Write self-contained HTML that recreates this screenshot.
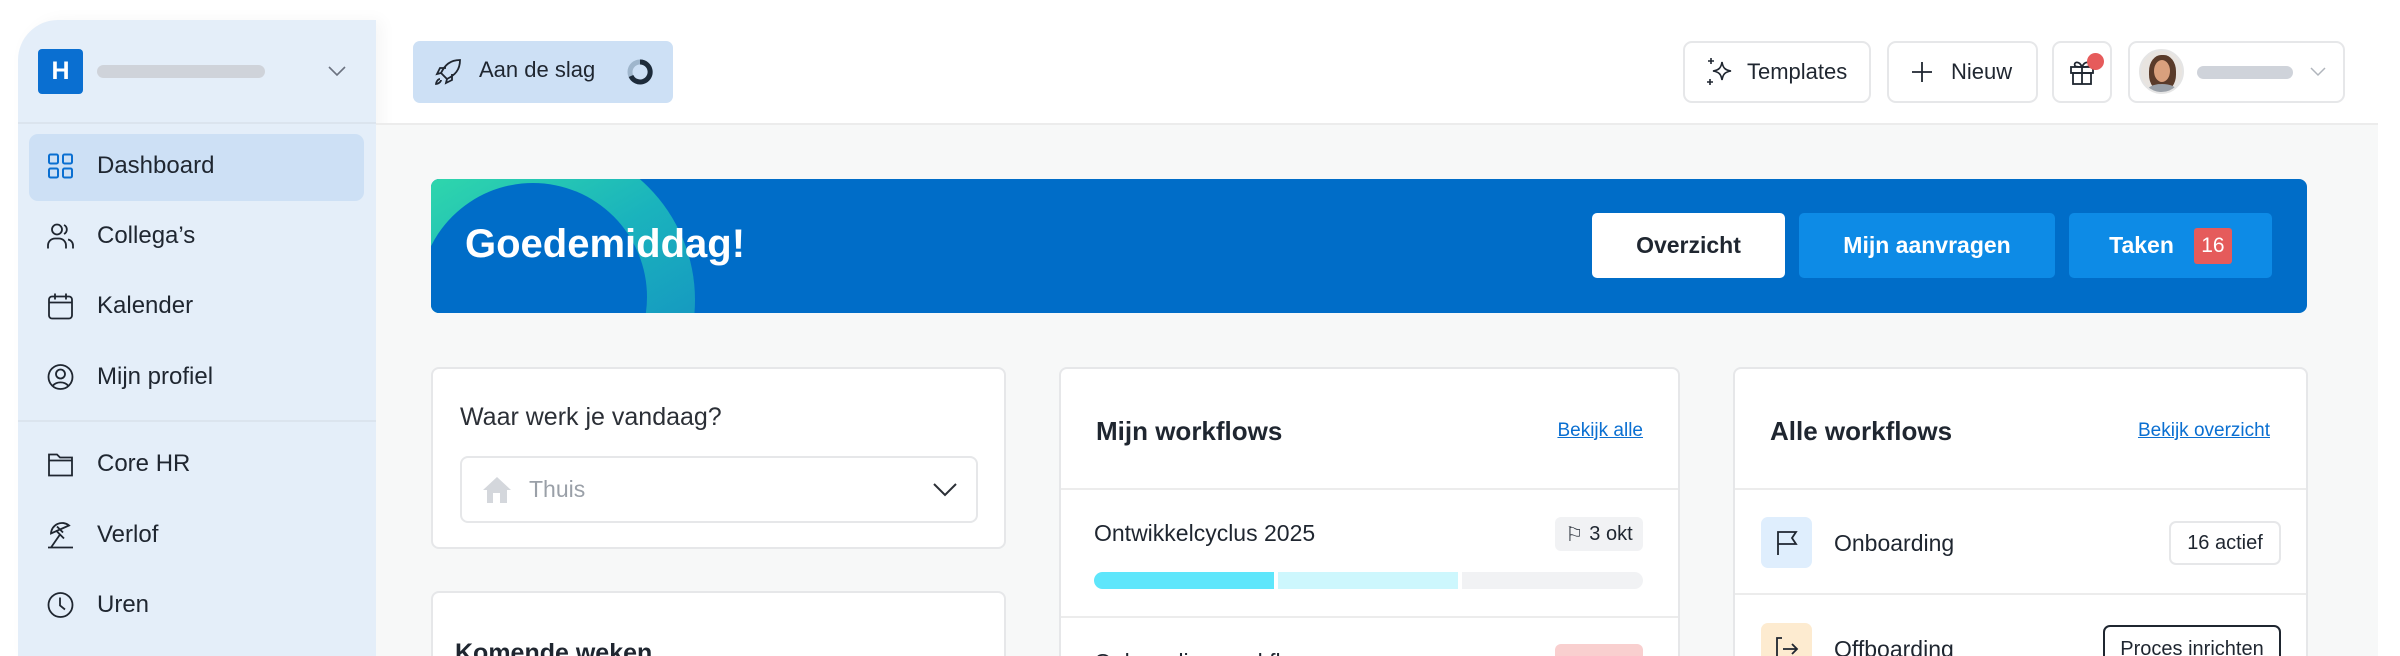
<!DOCTYPE html>
<html><head><meta charset="utf-8"><style>
*{box-sizing:border-box;margin:0;padding:0}
html,body{width:2400px;height:656px;overflow:hidden}
body{background:#fff;font-family:"Liberation Sans",sans-serif;color:#1f2630;position:relative}
.abs{position:absolute}
.sb{left:18px;top:20px;width:358px;height:636px;background:#e4eef9;border-top-left-radius:40px;box-shadow:6px 0 16px rgba(0,0,0,0.04)}
.nav{position:absolute;left:97px;font-size:24px;color:#1f2630;transform:translateY(-50%)}
.ic{position:absolute;left:47px;width:27px;height:27px;transform:translateY(-50%)}
.main{left:376px;top:123px;width:2002px;height:533px;background:#f7f8f8;border-top:2px solid #ececec}
.btn{position:absolute;top:41px;height:62px;border:2px solid #e6e7e9;border-radius:9px;background:#fff;font-size:22px;display:flex;align-items:center}
.card{position:absolute;background:#fff;border:2px solid #e6e7e9;border-radius:8px;overflow:hidden}
.open{border-bottom:none;border-radius:8px 8px 0 0}
.hb{position:absolute;top:213px;height:65px;border-radius:5px;display:flex;align-items:center;justify-content:center;font-size:23px;font-weight:bold}
.link{position:absolute;color:#0a6fd1;text-decoration:underline;font-size:19px}
</style></head><body>
<div class="abs sb"></div>
<div class="abs" style="left:38px;top:49px;width:45px;height:45px;background:#0a6fd1;border-radius:4px;color:#fff;font-weight:bold;font-size:25px;display:flex;align-items:center;justify-content:center">H</div>
<div class="abs" style="left:97px;top:65px;width:168px;height:13px;background:#cfd3da;border-radius:7px"></div>
<svg class="abs" style="left:328px;top:65px" width="18" height="12" viewBox="0 0 18 12"><path d="M1 2l8 8 8-8" fill="none" stroke="#6b7280" stroke-width="1.6"/></svg>
<div class="abs" style="left:18px;top:122px;width:358px;height:2px;background:#dbe4ee"></div>
<div class="abs" style="left:29px;top:134px;width:335px;height:67px;background:#cde0f5;border-radius:9px"></div>
<svg class="ic" style="top:166px" viewBox="0 0 27 27" fill="none" stroke="#0a6fd1" stroke-width="2"><rect x="2" y="2" width="9" height="9" rx="1.5"/><rect x="16" y="2" width="9" height="9" rx="1.5"/><rect x="2" y="16" width="9" height="9" rx="1.5"/><rect x="16" y="16" width="9" height="9" rx="1.5"/></svg>
<div class="nav" style="top:166px">Dashboard</div>
<svg class="ic" style="top:236px" viewBox="0 0 27 27" fill="none" stroke="#1f2630" stroke-width="1.8"><circle cx="10" cy="7" r="5"/><path d="M1 26v-3a7 7 0 0 1 7-7h4a7 7 0 0 1 7 7v3"/><path d="M17 2.5a5 5 0 0 1 0 9M21 17a6 6 0 0 1 5 6v3"/></svg>
<div class="nav" style="top:236px">Collega’s</div>
<svg class="ic" style="top:306px" viewBox="0 0 27 27" fill="none" stroke="#1f2630" stroke-width="1.8"><rect x="2" y="4" width="23" height="22" rx="3"/><path d="M2 10h23M8 1v6M19 1v6"/></svg>
<div class="nav" style="top:306px">Kalender</div>
<svg class="ic" style="top:377px" viewBox="0 0 27 27" fill="none" stroke="#1f2630" stroke-width="1.8"><circle cx="13.5" cy="13.5" r="12"/><circle cx="13.5" cy="10.5" r="4.5"/><path d="M6 22a9 7 0 0 1 15 0"/></svg>
<div class="nav" style="top:377px">Mijn profiel</div>
<div class="abs" style="left:18px;top:420px;width:358px;height:2px;background:#dbe4ee"></div>
<svg class="ic" style="top:464px" viewBox="0 0 27 27" fill="none" stroke="#1f2630" stroke-width="1.8"><path d="M2 4h8l3 3h12v18H2z"/><path d="M2 10h23"/></svg>
<div class="nav" style="top:464px">Core HR</div>
<svg class="ic" style="top:535px" viewBox="0 0 27 27" fill="none" stroke="#1f2630" stroke-width="1.8"><path d="M4 12a11 11 0 0 1 18-8z"/><path d="M9 9l8 8M13 13L4 26M1 26h25M10 5l6 6"/></svg>
<div class="nav" style="top:535px">Verlof</div>
<svg class="ic" style="top:605px" viewBox="0 0 27 27" fill="none" stroke="#1f2630" stroke-width="1.8"><circle cx="13.5" cy="13.5" r="12"/><path d="M13 6v8l5 4"/></svg>
<div class="nav" style="top:605px">Uren</div>

<div class="abs" style="left:413px;top:41px;width:260px;height:62px;background:#cde0f5;border-radius:7px"></div>
<svg class="abs" style="left:434px;top:58px" width="28" height="28" viewBox="0 0 28 28" fill="none" stroke="#1f2630" stroke-width="1.8"><path d="M10 18l-3-3c4-8 9-13 19-13 0 10-5 15-13 19z"/><path d="M7 15l-4 1 3-6h6M13 21l-1 4 6-3v-6M6 21c-2 0-4 3-4 5 2 0 5-2 5-4"/></svg>
<div class="abs" style="left:479px;top:57px;font-size:22px">Aan de slag</div>
<svg class="abs" style="left:626px;top:58px" width="28" height="28" viewBox="0 0 28 28"><circle cx="14" cy="14" r="10" fill="none" stroke="#9fb6cc" stroke-width="5"/><path d="M14 4a10 10 0 1 1-9 14" fill="none" stroke="#1d2b3a" stroke-width="5"/></svg>
<div class="abs main"></div>
<div class="abs" style="left:2378px;top:0;width:22px;height:656px;background:#fff"></div>

<div class="btn" style="left:1683px;width:188px;padding-left:20px"><svg width="30" height="30" viewBox="0 0 30 30" fill="none" stroke="#1f2630" stroke-width="1.6"><path d="M17 5c1 6 3 8 9 9-6 1-8 3-9 9-1-6-3-8-9-9 6-1 8-3 9-9z"/><path d="M6 1v6M3 4h6M5 22v6M2 25h6"/></svg><span style="margin-left:12px">Templates</span></div>
<div class="btn" style="left:1887px;width:151px;padding-left:22px"><svg width="22" height="22" viewBox="0 0 22 22" stroke="#1f2630" stroke-width="1.8"><path d="M11 1v20M1 11h20"/></svg><span style="margin-left:18px">Nieuw</span></div>
<div class="btn" style="left:2052px;width:60px;justify-content:center"><svg width="28" height="28" viewBox="0 0 28 28" fill="none" stroke="#1f2630" stroke-width="1.8"><rect x="3" y="9" width="22" height="6"/><rect x="5" y="15" width="18" height="11"/><path d="M14 9v17M14 9c-3-7-9-5-7-1 1 1 4 1 7 1M14 9c3-7 9-5 7-1-1 1-4 1-7 1"/></svg></div>
<div class="abs" style="left:2087px;top:53px;width:17px;height:17px;background:#e65b5b;border-radius:50%"></div>
<div class="btn" style="left:2128px;width:217px"></div>
<div class="abs" style="left:2139px;top:49px;width:45px;height:45px;border-radius:50%;background:#e8e4e0;overflow:hidden;border:2px solid #e5e5e5"><div style="position:absolute;left:8px;top:4px;width:27px;height:36px;border-radius:45%;background:#5a3b2a"></div><div style="position:absolute;left:13px;top:9px;width:16px;height:22px;border-radius:50%;background:#d9a07d"></div><div style="position:absolute;left:6px;top:33px;width:30px;height:14px;border-radius:50%;background:#9aa0a8"></div></div>
<div class="abs" style="left:2197px;top:66px;width:96px;height:13px;background:#cfd3da;border-radius:7px"></div>
<svg class="abs" style="left:2310px;top:66px" width="16" height="11" viewBox="0 0 16 11"><path d="M1 2l7 7 7-7" fill="none" stroke="#b0b5bc" stroke-width="1.5"/></svg>

<div class="abs" style="left:431px;top:179px;width:1876px;height:134px;background:#006dc8;border-radius:8px;overflow:hidden">
<div style="position:absolute;left:-56px;top:-39px;width:320px;height:320px;border-radius:50%;background:linear-gradient(150deg,#38e6a4 0%,#1ab3bd 45%,#117fc4 100%)"></div>
<div style="position:absolute;left:-12px;top:4px;width:228px;height:228px;border-radius:50%;background:#006dc8"></div>
<div style="position:absolute;left:34px;top:43px;font-size:40px;font-weight:bold;color:#fff">Goedemiddag!</div>
</div>
<div class="hb" style="left:1592px;width:193px;background:#fff;color:#1f2630">Overzicht</div>
<div class="hb" style="left:1799px;width:256px;background:#0d8be6;color:#fff">Mijn aanvragen</div>
<div class="hb" style="left:2069px;width:203px;background:#0d8be6;color:#fff"><span>Taken</span><span style="margin-left:20px;width:38px;height:36px;background:#e55b5b;border-radius:3px;display:flex;align-items:center;justify-content:center;font-weight:normal;font-size:21px">16</span></div>

<div class="card" style="left:431px;top:367px;width:575px;height:182px">
<div style="position:absolute;left:27px;top:34px;font-size:25px;color:#2b2f36">Waar werk je vandaag?</div>
<div style="position:absolute;left:27px;top:87px;width:518px;height:67px;border:2px solid #e6e7e9;border-radius:8px">
<svg style="position:absolute;left:20px;top:17px" width="30" height="30" viewBox="0 0 30 30"><path d="M15 2L1 15h4v13h20V15h4z" fill="#d4d7dc"/><rect x="11" y="18" width="7" height="10" fill="#fff"/></svg>
<div style="position:absolute;left:67px;top:18px;font-size:23px;color:#9aa0a8">Thuis</div>
<svg style="position:absolute;left:470px;top:24px" width="26" height="16" viewBox="0 0 26 16"><path d="M2 2l11 11L24 2" fill="none" stroke="#2b2f36" stroke-width="2"/></svg>
</div></div>
<div class="card open" style="left:431px;top:591px;width:575px;height:65px"><div style="position:absolute;left:22px;top:46px;font-size:25px;font-weight:bold">Komende weken</div></div>

<div class="card open" style="left:1059px;top:367px;width:621px;height:289px">
<div style="position:absolute;left:35px;top:47px;font-size:26px;font-weight:bold">Mijn workflows</div>
<div class="link" style="right:35px;top:51px">Bekijk alle</div>
<div style="position:absolute;left:0;right:0;top:119px;height:2px;background:#ececec"></div>
<div style="position:absolute;left:33px;top:151px;font-size:23px">Ontwikkelcyclus 2025</div>
<div style="position:absolute;left:494px;top:148px;width:88px;height:34px;background:#f1f2f4;border-radius:6px;font-size:20px;display:flex;align-items:center;justify-content:center"><span style="margin-right:6px">⚐</span>3 okt</div>
<div style="position:absolute;left:33px;top:203px;width:180px;height:17px;background:#5ee6fb;border-radius:9px 0 0 9px"></div>
<div style="position:absolute;left:217px;top:203px;width:180px;height:17px;background:#cdf7fd"></div>
<div style="position:absolute;left:401px;top:203px;width:181px;height:17px;background:#f1f2f4;border-radius:0 9px 9px 0"></div>
<div style="position:absolute;left:0;right:0;top:247px;height:2px;background:#ececec"></div>
<div style="position:absolute;left:33px;top:280px;font-size:23px">Onboarding workflow</div>
<div style="position:absolute;left:494px;top:275px;width:88px;height:34px;background:#f9cfcf;border-radius:6px"></div>
</div>

<div class="card open" style="left:1733px;top:367px;width:575px;height:289px">
<div style="position:absolute;left:35px;top:47px;font-size:26px;font-weight:bold">Alle workflows</div>
<div class="link" style="right:36px;top:51px">Bekijk overzicht</div>
<div style="position:absolute;left:0;right:0;top:119px;height:2px;background:#ececec"></div>
<div style="position:absolute;left:26px;top:148px;width:51px;height:51px;background:#dfeefd;border-radius:7px;display:flex;align-items:center;justify-content:center"><svg width="24" height="26" viewBox="0 0 24 26" fill="none" stroke="#1f2630" stroke-width="1.8"><path d="M3 25V2h18l-4 6 4 6H3"/></svg></div>
<div style="position:absolute;left:99px;top:161px;font-size:23px">Onboarding</div>
<div style="position:absolute;left:434px;top:152px;width:112px;height:44px;border:2px solid #e6e7e9;border-radius:7px;font-size:20px;display:flex;align-items:center;justify-content:center">16 actief</div>
<div style="position:absolute;left:0;right:0;top:224px;height:2px;background:#ececec"></div>
<div style="position:absolute;left:26px;top:254px;width:51px;height:51px;background:#fdebd0;border-radius:7px;display:flex;align-items:center;justify-content:center"><svg width="26" height="26" viewBox="0 0 26 26" fill="none" stroke="#1f2630" stroke-width="1.8"><path d="M8 2H3v22h5M9 13h14M18 8l5 5-5 5"/></svg></div>
<div style="position:absolute;left:99px;top:267px;font-size:23px">Offboarding</div>
<div style="position:absolute;left:368px;top:256px;width:178px;height:48px;border:2px solid #1f2630;border-radius:7px;font-size:20px;display:flex;align-items:center;justify-content:center">Proces inrichten</div>
</div>
</body></html>
